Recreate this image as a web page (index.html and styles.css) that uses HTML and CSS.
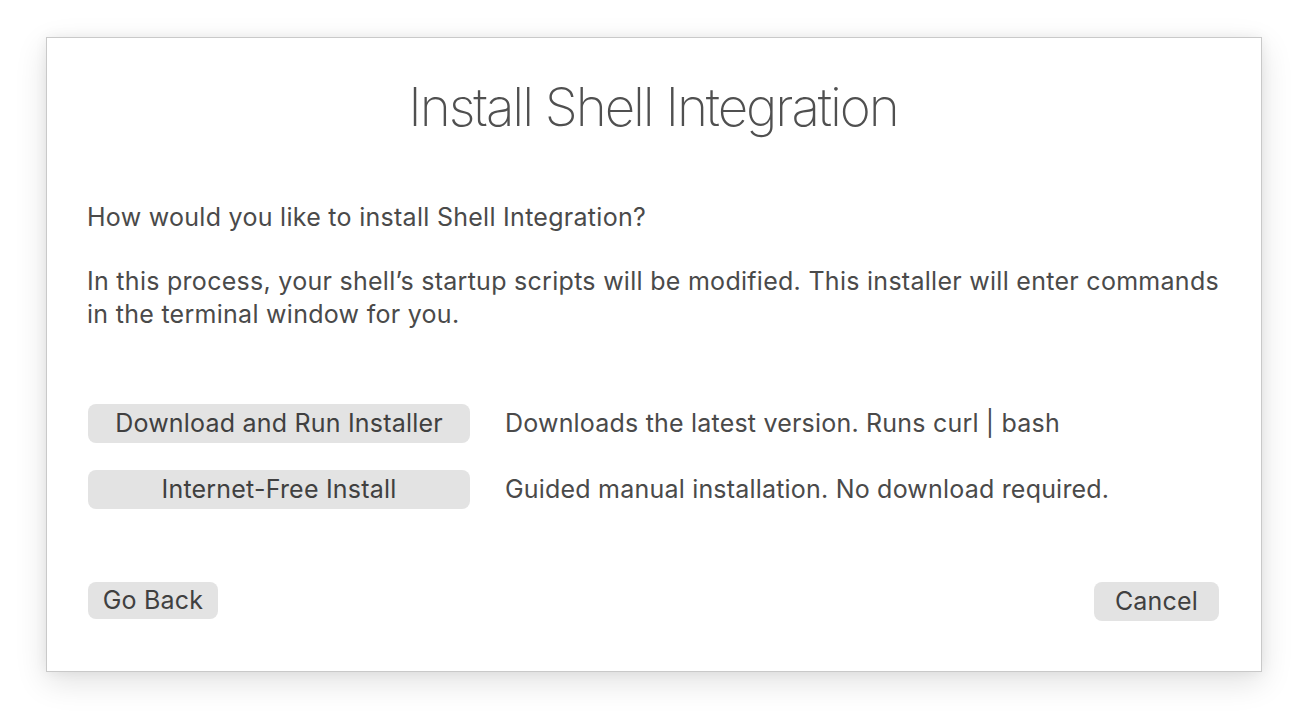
FILE: index.html
```html
<!DOCTYPE html>
<html>
<head>
<meta charset="utf-8">
<link rel="stylesheet" href="styles.css">
</head>
<body>
<div class="dialog">
  <h1 class="title">Install Shell Integration</h1>
  <p class="question">How would you like to install Shell Integration?</p>
  <p class="info">In this process, your shell’s startup scripts will be modified. This installer will enter commands in the terminal window for you.</p>
  <div class="options">
    <div class="option">
      <button class="btn btn-wide">Download and Run Installer</button>
      <span class="desc">Downloads the latest version. Runs curl | bash</span>
    </div>
    <div class="option">
      <button class="btn btn-wide">Internet-Free Install</button>
      <span class="desc">Guided manual installation. No download required.</span>
    </div>
  </div>
  <div class="footer">
    <button class="btn btn-small">Go Back</button>
    <button class="btn btn-small btn-cancel">Cancel</button>
  </div>
</div>
</body>
</html>
```
FILE: styles.css
```css
html, body {
  margin: 0;
  padding: 0;
  background: #ffffff;
}
body {
  width: 1308px;
  height: 726px;
  overflow: hidden;
  font-family: Inter, "Liberation Sans", sans-serif;
  color: #4a4a4a;
}
.dialog {
  box-sizing: border-box;
  margin: 37px 0 0 46px;
  width: 1216px;
  height: 635px;
  background: #fff;
  border: 1px solid #c9c9c9;
  box-shadow: 0 10px 30px rgba(0,0,0,0.12), 0 0 12px rgba(0,0,0,0.06);
  padding: 0 42px 0 40px;
  display: flex;
  flex-direction: column;
}
.title {
  margin: 37px 0 0 0;
  text-align: center;
  font-size: 53px;
  font-weight: 200;
  line-height: 64px;
  color: #505050;
  letter-spacing: -2.1px;
}
.question {
  margin: 62px 0 0 0;
  font-size: 25px;
  letter-spacing: 0.28px;
  line-height: 33px;
}
.info {
  margin: 31px 0 0 0;
  font-size: 25px;
  letter-spacing: 0.28px;
  line-height: 33px;
}
.options {
  margin-top: 73px;
  display: flex;
  flex-direction: column;
  gap: 27px;
}
.option {
  display: flex;
  align-items: center;
  gap: 35px;
}
.btn {
  font-family: Inter, "Liberation Sans", sans-serif;
  font-size: 25px;
  letter-spacing: 0.2px;
  color: #404040;
  background: #e3e3e3;
  border: none;
  border-radius: 8px;
  height: 39px;
  padding: 0;
  line-height: 39px;
}
.btn-wide {
  width: 382px;
  margin-left: 1px;
}
.desc {
  font-size: 25px;
  letter-spacing: 0.2px;
  line-height: 33px;
}
.footer {
  margin-top: 73px;
  display: flex;
  justify-content: space-between;
  align-items: flex-start;
}
.btn-small {
  height: 37px;
  line-height: 37px;
  width: 130px;
  margin-left: 1px;
}
.btn-cancel {
  width: 125px;
  height: 39px;
  line-height: 39px;
}
```
